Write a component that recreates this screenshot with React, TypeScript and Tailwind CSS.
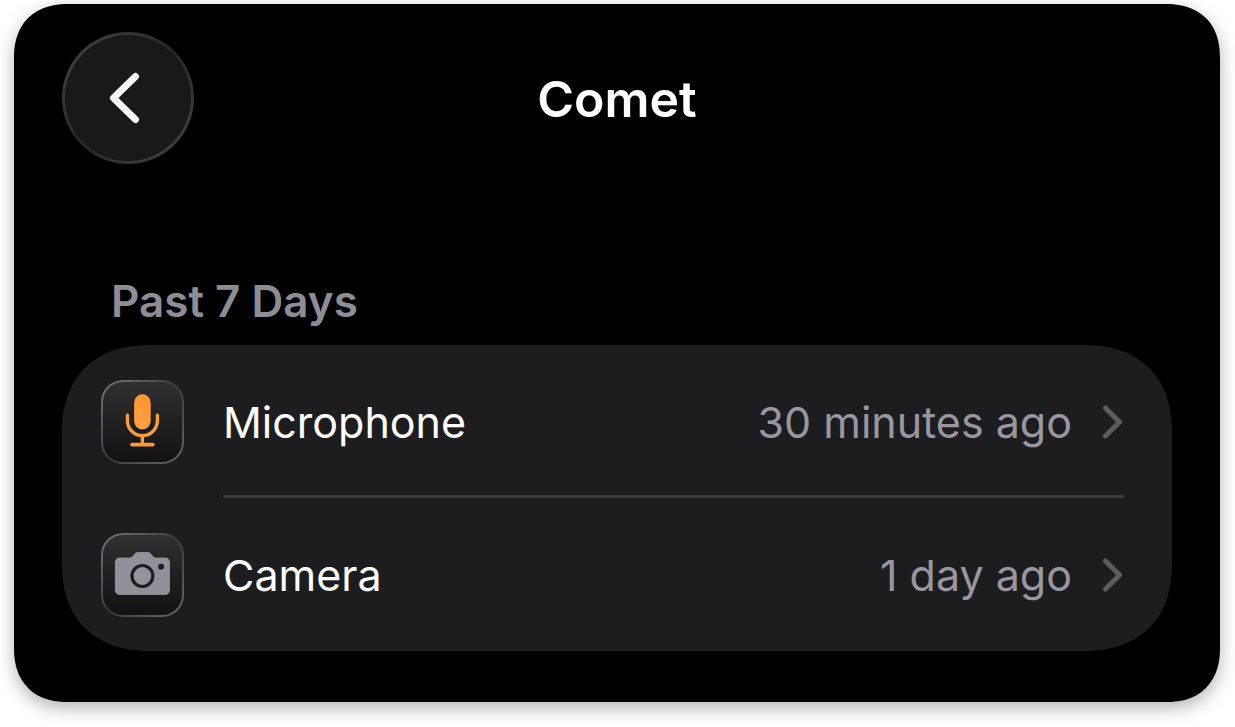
import type { ReactNode } from "react";

type Entry = { id: string; label: string; when: string; icon: ReactNode };

function MicrophoneIcon() {
  return (
    <svg viewBox="2 2 80 80" className="size-full" aria-hidden="true">
      <defs>
        <linearGradient id="mic" x1="0" y1="0" x2="0" y2="1">
          <stop offset="0" stopColor="#ff9630" />
          <stop offset="1" stopColor="#ffa044" />
        </linearGradient>
      </defs>
      <rect x="33.5" y="14" width="16.8" height="35.5" rx="8.4" fill="url(#mic)" />
      <g fill="none" stroke="#f99a40" strokeWidth="3.4" strokeLinecap="round">
        <path d="M26.7 35v5.6a15.2 15.2 0 0 0 30.4 0V35" />
        <path d="M41.9 56v8.5" />
        <path d="M31.4 64.8h21" strokeWidth="3.8" />
      </g>
    </svg>
  );
}

function CameraIcon() {
  return (
    <svg viewBox="2 2 80 80" className="size-full" aria-hidden="true">
      <path
        d="M18.9 24.8h10.2c1.2 0 1.9-.4 2.7-1.3l2.4-2.7c1-1.1 2-1.6 3.5-1.6h9.2c1.5 0 2.5.5 3.5 1.6l2.4 2.7c.8.9 1.5 1.3 2.7 1.3h9.4c2.8 0 4.4 1.7 4.4 4.5v27.9c0 2.8-1.6 4.5-4.4 4.5h-46c-2.8 0-4.4-1.7-4.4-4.5V29.3c0-2.8 1.6-4.5 4.4-4.5Z"
        fill="#92919a"
        stroke="#9c9ba3"
        strokeWidth="0.8"
      />
      <circle cx="41.9" cy="43" r="10.6" fill="#94939c" stroke="#1e1e20" strokeWidth="3.2" />
      <circle cx="60.8" cy="33.6" r="3" fill="#1e1e20" />
    </svg>
  );
}

const entries: Entry[] = [
  { id: "microphone", label: "Microphone", when: "30 minutes ago", icon: <MicrophoneIcon /> },
  { id: "camera", label: "Camera", when: "1 day ago", icon: <CameraIcon /> },
];

function EntryRow({ entry, divided }: { entry: Entry; divided: boolean }) {
  return (
    <li>
      <a href={`#${entry.id}`} className="flex h-[153px] items-stretch gap-[39px] pr-12 pl-[39px]">
        <span className="h-[84px] w-[83px] shrink-0 self-center rounded-[22px] bg-linear-to-br from-[#777779] via-[#3c3c3e] to-[#68686a] p-[2px]">
          <span className="block size-full rounded-[20px] bg-linear-to-b from-[#303031] to-[#121213]">
            {entry.icon}
          </span>
        </span>
        <span
          className={
            divided
              ? "flex min-w-0 flex-1 items-center border-b-3 border-[#3a3a3d] pt-[3px]"
              : "flex min-w-0 flex-1 items-center"
          }
        >
          <span className="flex-1 text-white">{entry.label}</span>
          <span className="text-[#98979f]">{entry.when}</span>
          <svg viewBox="0 0 22 36" className="ml-[30px] h-9 w-[22px] shrink-0" aria-hidden="true">
            <path
              d="M3.5 4 17.5 18 3.5 32"
              fill="none"
              stroke="#5b5b60"
              strokeWidth="5"
              strokeLinecap="round"
              strokeLinejoin="round"
            />
          </svg>
        </span>
      </a>
    </li>
  );
}

export default function App() {
  return (
    <div className="bg-white pt-1 pr-[15px] pb-6 pl-[14px] font-['Inter','Liberation_Sans',sans-serif]">
      <main className="rounded-[54px] bg-black px-12 pt-7 pb-[51px] shadow-[0_6px_18px_rgba(0,0,0,0.3)] [corner-shape:superellipse(1.2)]">
        <header className="grid grid-cols-[132px_1fr_132px] items-center">
          <button
            type="button"
            aria-label="Back"
            className="size-[132px] rounded-full bg-linear-to-br from-[#464646] via-[#262626] to-[#464646] p-[3px]"
          >
            <span className="flex size-full items-center justify-center rounded-full bg-[#191919]">
              <svg viewBox="1 1 126 126" className="size-full" aria-hidden="true">
                <path
                  d="M71.5 42.5 49.5 64l22 21.5"
                  fill="none"
                  stroke="#f3f3f3"
                  strokeWidth="7"
                  strokeLinecap="round"
                  strokeLinejoin="round"
                />
              </svg>
            </span>
          </button>
          <h1 className="pt-[2px] text-center text-[50px] leading-[60px] font-semibold text-white">
            Comet
          </h1>
        </header>
        <section className="mt-[109px]" aria-labelledby="period">
          <h2 id="period" className="pl-[49px] text-[44px] leading-[56px] font-semibold text-[#8e8d95]">
            Past 7 Days
          </h2>
          <ul className="mt-4 rounded-[88px] bg-[#1d1d1f] text-[43px] leading-[56px] [corner-shape:superellipse(1.2)]">
            {entries.map((entry, i) => (
              <EntryRow key={entry.id} entry={entry} divided={i < entries.length - 1} />
            ))}
          </ul>
        </section>
      </main>
    </div>
  );
}
